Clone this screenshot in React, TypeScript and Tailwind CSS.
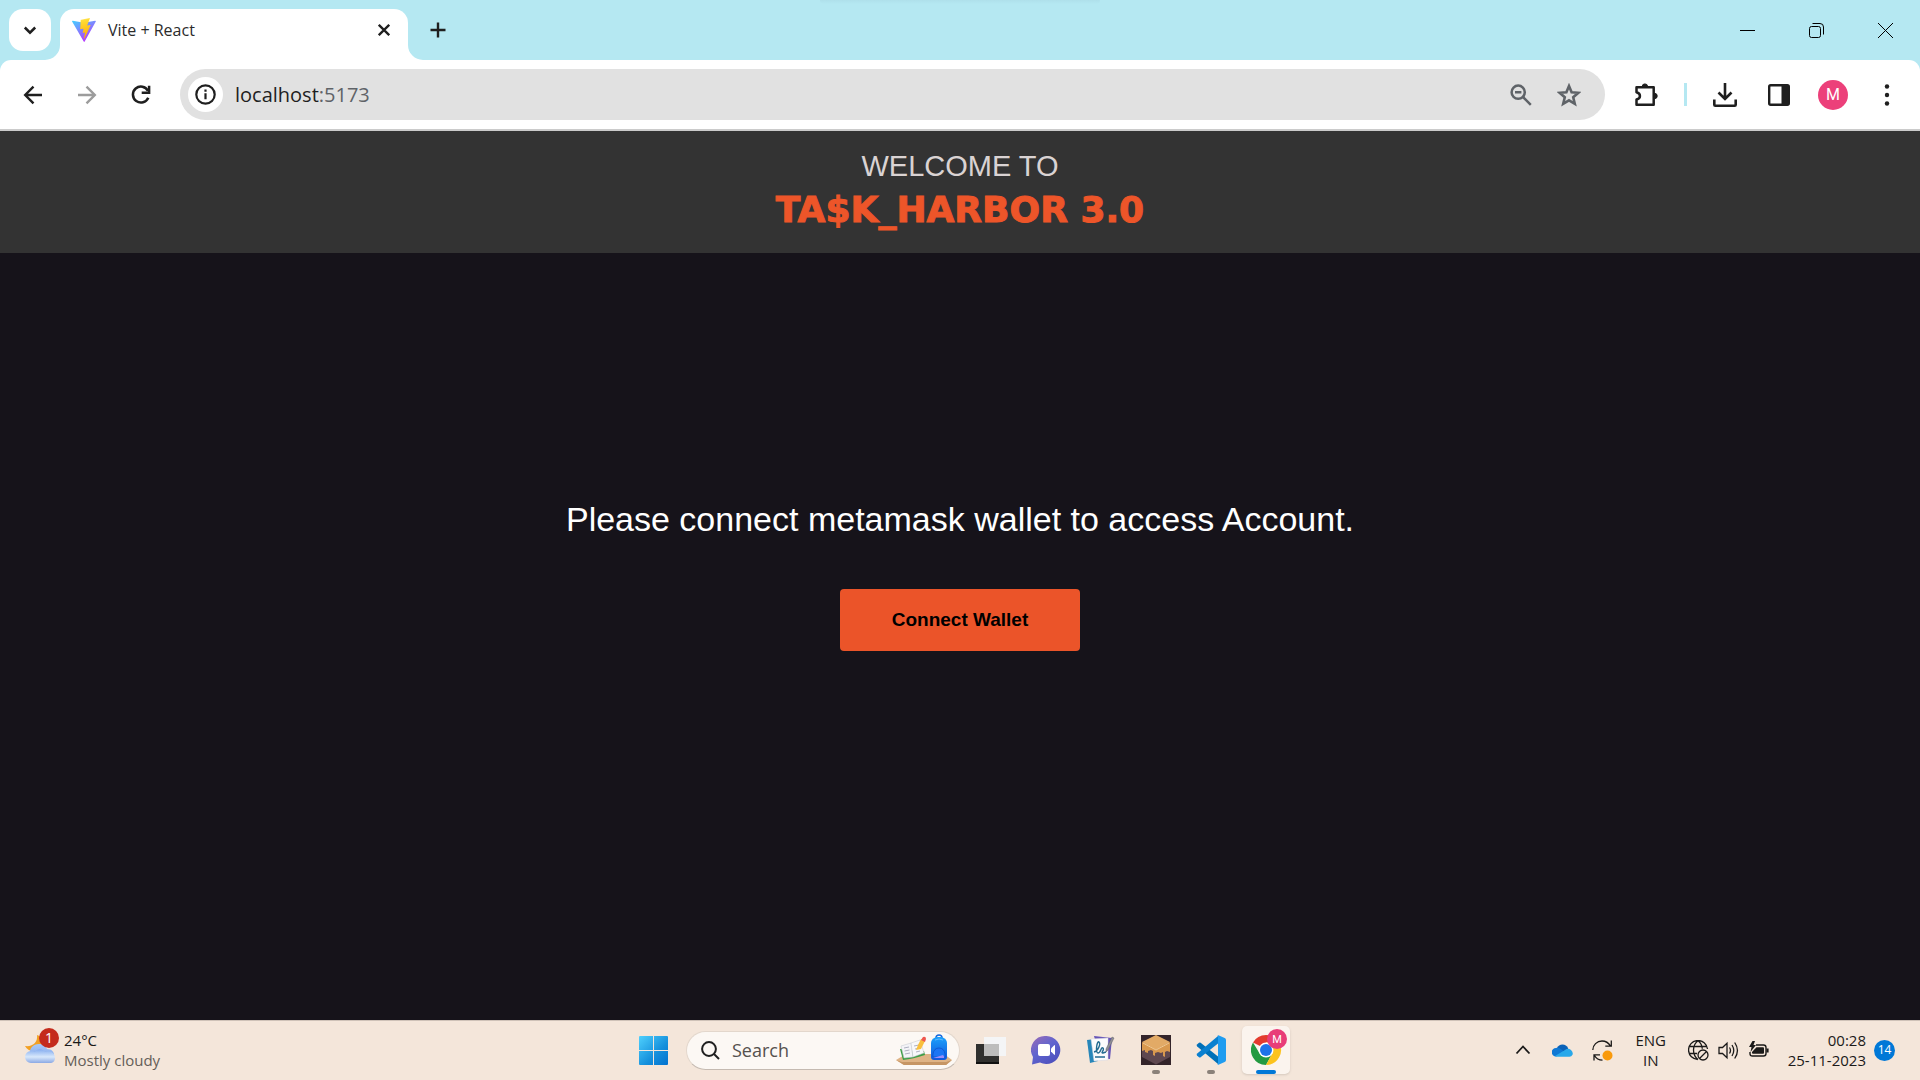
import React from "react";

const uiFont = "font-['Segoe_UI','Open_Sans','Noto_Sans',sans-serif]";

function ViteLogo() {
  return (
    <svg className="size-6" viewBox="0 0 24 24" aria-hidden="true">
      <defs>
        <linearGradient id="viteBody" x1="0" y1="0" x2="0.6" y2="1">
          <stop offset="0" stopColor="#41d1ff" />
          <stop offset="1" stopColor="#bd34fe" />
        </linearGradient>
        <linearGradient id="viteBolt" x1="0.4" y1="0" x2="0.5" y2="1">
          <stop offset="0" stopColor="#ffea83" />
          <stop offset="0.1" stopColor="#ffdd35" />
          <stop offset="1" stopColor="#ffa800" />
        </linearGradient>
      </defs>
      <path d="M23.8 3.6 12.7 23.6c-.2.4-.8.4-1 0L.1 3.6c-.3-.5.1-1 .6-.9L12 4.700l11.1-2c.5-.1 1 .4.7.9Z" fill="url(#viteBody)" />
      <path d="m17.500.1-8.500 1.700c-.2 0-.3.1-.3.3L8.200 11c0 .2.2.4.4.3l2.400-.500c.2-.1.4.1.4.4l-.700 3.400c0 .2.2.4.4.4l1.500-.500c.2-.1.4.1.4.4l-1.100 5.400c-.1.3.4.5.6.2l6-13c.100-.3-.1-.5-.4-.4l-2.500.500c-.2 0-.4-.2-.4-.4L17.900.6c.1-.3-.1-.5-.4-.5Z" fill="url(#viteBolt)" />
    </svg>
  );
}

function TabStrip() {
  return (
    <div className="relative flex h-[60px] items-stretch bg-[#b5e8f2]">
      <span className="absolute inset-x-0 top-0 mx-auto h-1 w-[280px] rounded-b-full bg-linear-to-b from-[#afe0eb] to-[#b5e8f2]" />
      <button aria-label="Search tabs" className="mt-[9px] ml-[9px] flex size-[42px] items-center justify-center rounded-[14px] bg-white">
        <svg className="size-4" viewBox="0 0 16 16" fill="none" stroke="#1f1f1f" strokeWidth="2.500">
          <path d="m2.800 5.500 5.200 5.200 5.200-5.200" />
        </svg>
      </button>
      <div className="relative mt-[9px] ml-[9px] flex w-[348px] items-center rounded-t-[14px] bg-white pb-[9px] pl-3">
        <svg className="absolute bottom-0 -left-[15px] size-[15px]" viewBox="0 0 15 15" aria-hidden="true">
          <path d="M15 0v15H0A15 15 0 0 0 15 0Z" fill="#fff" />
        </svg>
        <svg className="absolute -right-[15px] bottom-0 size-[15px]" viewBox="0 0 15 15" aria-hidden="true">
          <path d="M0 0v15h15A15 15 0 0 1 0 0Z" fill="#fff" />
        </svg>
        <ViteLogo />
        <span className="ml-3 flex-1 text-[16px] leading-5 text-[#2b2b2b]">Vite + React</span>
        <button aria-label="Close tab" className="mr-[15px] flex size-[18px] items-center justify-center">
          <svg className="size-3" viewBox="0 0 12 12" fill="none" stroke="#1f1f1f" strokeWidth="2.300">
            <path d="m.8.8 10.400 10.400M11.200.8.8 11.200" />
          </svg>
        </button>
      </div>
      <button aria-label="New tab" className="ml-4 flex w-7 items-center justify-center">
        <svg className="size-4" viewBox="0 0 16 16" fill="none" stroke="#1f1f1f" strokeWidth="2.400">
          <path d="M8 .5v15M.5 8h15" />
        </svg>
      </button>
      <div className="flex-1" />
      <div className="flex" aria-label="Window controls">
        <button aria-label="Minimise" className="flex w-[69px] items-center justify-center">
          <svg className="size-[15px]" viewBox="0 0 15 15" stroke="#000"><path d="M0 7.500h15" /></svg>
        </button>
        <button aria-label="Restore" className="flex w-[69px] items-center justify-center">
          <svg className="size-[15px]" viewBox="0 0 15 15" fill="none" stroke="#000">
            <rect x=".5" y="3.500" width="11" height="11" rx="2" />
            <path d="M3.500.5H11a3.500 3.500 0 0 1 3.500 3.500v7.500" />
          </svg>
        </button>
        <button aria-label="Close" className="flex w-[69px] items-center justify-center">
          <svg className="size-[15px]" viewBox="0 0 15 15" stroke="#000"><path d="m0 0 15 15M15 0 0 15" /></svg>
        </button>
      </div>
    </div>
  );
}

function ToolButton({ label, children }: { label: string; children: React.ReactNode }) {
  return (
    <button aria-label={label} className="flex h-[42px] w-[54px] items-center justify-center">
      {children}
    </button>
  );
}

function Toolbar() {
  return (
    <div className="bg-[#b5e8f2]">
      <div className="flex h-[71px] items-center rounded-t-[11px] border-b-2 border-[#cbcbcb] bg-white pl-[6px]">
        <ToolButton label="Back">
          <svg className="size-5" viewBox="0 0 20 20" fill="none" stroke="#1f1f1f" strokeWidth="2.400">
            <path d="M19 10H2.500M10.500 1.700 2.200 10l8.300 8.300" />
          </svg>
        </ToolButton>
        <ToolButton label="Forward">
          <svg className="size-5" viewBox="0 0 20 20" fill="none" stroke="#9c9c9c" strokeWidth="2.400">
            <path d="M1 10h16.500M9.500 1.700l8.300 8.300-8.300 8.300" />
          </svg>
        </ToolButton>
        <ToolButton label="Reload">
          <svg className="size-5" viewBox="0 0 20 20" fill="none" stroke="#1f1f1f" strokeWidth="2.500">
            <path d="M17.300 12.700A8 8 0 1 1 17 5.800" />
            <path d="M18.100.8v6.900h-7.400" />
          </svg>
        </ToolButton>
        <div className="ml-3 flex h-[51px] flex-1 items-center rounded-full bg-[#e1e1e1] pl-2">
          <button aria-label="Site information" className="flex size-[35px] items-center justify-center rounded-full bg-white">
            <svg className="size-[21px]" viewBox="0 0 21 21" fill="none" stroke="#1f1f1f" strokeWidth="2.200">
              <circle cx="10.500" cy="10.500" r="9.200" />
              <path d="M10.500 9.300v6M10.500 5.500v2.200" />
            </svg>
          </button>
          <div className="relative ml-3 flex-1">
            <div className="pointer-events-none text-[20px] leading-7 text-[#5f6368]" aria-hidden="true">
              <span className="text-[#1f1f1f]">localhost</span>:5173
            </div>
            <input aria-label="Address" defaultValue="localhost:5173" className="absolute inset-0 w-full bg-transparent text-[20px] leading-7 text-transparent outline-none" />
          </div>
          <button aria-label="Zoom" className="flex w-12 justify-center">
            <svg className="size-[22px]" viewBox="0 0 22 22" fill="none" stroke="#5f6368" strokeWidth="2.500">
              <circle cx="8.200" cy="8.200" r="6.600" />
              <path d="m13 13 7.800 7.800M5 8.200h6.400" />
            </svg>
          </button>
          <button aria-label="Bookmark this tab" className="mr-3 flex w-12 justify-center">
            <svg className="size-6" viewBox="0 0 24 24" fill="none" stroke="#5f6368" strokeWidth="2.600">
              <path d="m12 3 2.600 6.200 6.700.6-5.100 4.400 1.600 6.600L12 17.300l-5.800 3.500 1.600-6.600-5.100-4.400 6.700-.6Z" />
            </svg>
          </button>
        </div>
        <div className="ml-[14px] flex items-center">
          <ToolButton label="Extensions">
            <svg className="size-[26px]" viewBox="0 0 26 26">
              <path d="M3.500 5.200h17.200v17.600H3.500v-5.300c4.600-1.200 4.600-6 0-7.200Z" fill="none" stroke="#1f1f1f" strokeWidth="2.500" strokeLinejoin="round" />
              <path d="M9.200 4.600a2.700 2.700 0 0 1 5.400 0ZM21.500 11.300a2.700 2.700 0 0 1 0 5.400Z" fill="#1f1f1f" stroke="#1f1f1f" />
            </svg>
          </ToolButton>
          <span className="mx-[11px] h-[23px] w-[3px] bg-[#b5e8f2]" />
          <ToolButton label="Downloads">
            <svg className="size-[26px]" viewBox="0 0 26 26" fill="none" stroke="#1f1f1f" strokeWidth="2.600">
              <path d="M13 1v15M6.500 10.500 13 17l6.500-6.500M2.300 17.500v5.200q0 1 1 1h19.400q1 0 1-1v-5.200" />
            </svg>
          </ToolButton>
          <ToolButton label="Side panel">
            <svg className="size-[22px]" viewBox="0 0 22 22">
              <rect x="1.200" y="1.200" width="19.600" height="19.600" rx="1.500" fill="none" stroke="#1f1f1f" strokeWidth="2.400" />
              <path d="M13.500 1h7.300v20h-7.300Z" fill="#1f1f1f" />
            </svg>
          </ToolButton>
          <ToolButton label="Profile">
            <span className="flex size-[30px] items-center justify-center rounded-full bg-[#ec407a] font-['Roboto',sans-serif] text-[16px] text-white">M</span>
          </ToolButton>
          <ToolButton label="Menu">
            <svg className="size-[22px]" viewBox="0 0 22 22" fill="#1f1f1f">
              <circle cx="11" cy="2.500" r="2.200" />
              <circle cx="11" cy="11" r="2.200" />
              <circle cx="11" cy="19.500" r="2.200" />
            </svg>
          </ToolButton>
          <span className="w-[6px]" />
        </div>
      </div>
    </div>
  );
}

function Page() {
  return (
    <div className="flex flex-1 flex-col bg-[#16131a] font-['Liberation_Sans',Arial,sans-serif]">
      <header className="bg-[#333333] pt-4 pb-[18px] text-center">
        <p className="text-[29px] leading-[38px] text-[#dad3d3]">WELCOME TO</p>
        <h1 className="font-['Arial_Black','DejaVu_Sans',sans-serif] text-[36px] leading-[50px] font-black text-[#ed5529] [-webkit-text-stroke:1px_#ed5529]">TA$K_HARBOR 3.0</h1>
      </header>
      <main className="flex flex-1 flex-col items-center pt-[246px]">
        <p className="text-[34px] leading-10 text-white">Please connect metamask wallet to access Account.</p>
        <button className="mt-[50px] rounded-[4px] bg-[#eb5429] px-[52px] py-[19px] text-[19px] leading-6 font-bold text-black">Connect Wallet</button>
      </main>
    </div>
  );
}

function WeatherIcon() {
  return (
    <svg className="h-[44px] w-[36px]" viewBox="0 0 36 44" aria-hidden="true">
      <defs>
        <linearGradient id="cloudTop" x1="0" y1="0" x2="0" y2="1">
          <stop offset="0" stopColor="#a9c9f8" />
          <stop offset="1" stopColor="#8fb0ec" />
        </linearGradient>
        <linearGradient id="cloudFront" x1="0" y1="0" x2="0" y2="1">
          <stop offset="0" stopColor="#86aef0" />
          <stop offset=".55" stopColor="#d8e8fb" />
          <stop offset="1" stopColor="#8ba9e4" />
        </linearGradient>
      </defs>
      <path d="M13 7c1 7-4 12-12 11 3 6 12 7 17 2V9Z" fill="#f2a023" />
      <path d="M6 27c-1-7 3-11 9-11 4 0 7 2 8 5 5 0 7 3 7 6Z" fill="url(#cloudTop)" />
      <path d="M7 35a6 6 0 0 1 0-12c2 0 3 .5 4 1 3-4 8-3 10 0 5-2 10 1 10 6 0 3-2 5-5 5Z" fill="url(#cloudFront)" />
      <circle cx="25" cy="10" r="10" fill="#c42b1c" />
      <text x="25" y="15" textAnchor="middle" fontFamily="Open Sans" fontSize="14" fill="#fff">1</text>
    </svg>
  );
}

function WindowsLogo() {
  return (
    <svg className="size-[29px]" viewBox="0 0 29 29" aria-hidden="true">
      <defs>
        <linearGradient id="win" x1="0" y1="0" x2="29" y2="29" gradientUnits="userSpaceOnUse">
          <stop offset="0" stopColor="#4fd0fd" />
          <stop offset=".6" stopColor="#1590dc" />
          <stop offset="1" stopColor="#0272cf" />
        </linearGradient>
      </defs>
      <path d="M1 0h13v14H0V1q0-1 1-1ZM15 0h13q1 0 1 1v13H15ZM0 15h14v14H1q-1 0-1-1ZM15 15h14v13q0 1-1 1H15Z" fill="url(#win)" />
    </svg>
  );
}

function StudyArt() {
  return (
    <svg className="h-[32px] w-[58px]" viewBox="0 0 58 32" aria-hidden="true">
      <defs>
        <linearGradient id="bag" x1="0" y1="0" x2="0" y2="1">
          <stop offset="0" stopColor="#1ba0fb" />
          <stop offset="1" stopColor="#1056dc" />
        </linearGradient>
      </defs>
      <path d="m1 26 10-6h38l8 6-6 5H9Z" fill="#dfb486" />
      <path d="m1 26 6 2h44l6-2-6 5H9Z" fill="#c69665" />
      <path d="m5 15 3 11q10-1 22-5l-1-4Z" fill="#3c9e46" />
      <path d="m6 12 10-3 2 14-9 1Z" fill="#f4f4f7" stroke="#c3c4cc" strokeWidth=".5" />
      <path d="m16 9 9-3 4 13-11 4Z" fill="#f8f8fa" stroke="#c3c4cc" strokeWidth=".5" />
      <path d="m9 14 5-1M9.500 17l5-1M10 20l5-1M19 12l5-1M20 15l5-1M21 18l4-1" stroke="#9d9eb2" strokeWidth=".8" fill="none" />
      <path d="m23 11-2 5 5-1 4-8-4-2Z" fill="#f9bf3c" />
      <path d="m26 6 2-3q3-1 3 2l-1 3Z" fill="#ee574e" />
      <path d="M41 4c0-4 6-4 6 0" fill="none" stroke="#1668dd" strokeWidth="1.500" />
      <path d="M36 9q0-4 5-6h6q5 2 5 6v14q0 3-3 3H39q-3 0-3-3Z" fill="url(#bag)" />
      <path d="M38 20q1-6 6-6t6 6v3H38Z" fill="#1b75f4" stroke="#0a4dc9" strokeWidth=".7" />
      <path d="m38 24 10-3q2 2 1 3Z" fill="#9b8df8" />
      <path d="M40 6q4-2 8 0" stroke="#5fbaff" fill="none" />
    </svg>
  );
}

function TaskViewIcon() {
  return (
    <svg className="size-[30px]" viewBox="0 0 30 30" aria-hidden="true">
      <path d="M0 9h23v20H0Z" fill="#30302e" />
      <path d="M0 27h23v2H0Z" fill="#111" />
      <path d="M8 2h22v19H8Z" fill="#f4f5f6" />
      <path d="M8 9h15v12H8Z" fill="#bdbdbc" />
    </svg>
  );
}

function ChatIcon() {
  return (
    <svg className="size-[30px]" viewBox="0 0 30 30" aria-hidden="true">
      <defs>
        <linearGradient id="chat" x1="0" y1="0" x2=".7" y2="1">
          <stop offset="0" stopColor="#9c6bb5" />
          <stop offset=".5" stopColor="#6065cf" />
          <stop offset="1" stopColor="#4d50bd" />
        </linearGradient>
      </defs>
      <path d="M15.500 1A14 14 0 1 1 9 27.500L1 29.500l1-7.500A14 14 0 0 1 15.500 1Z" fill="url(#chat)" />
      <rect x="7" y="9" width="12" height="12" rx="2" fill="#fff" />
      <path d="m20 13.500 3-3q1-1 1 .5v8q0 1.500-1 .5l-3-3Z" fill="#fff" />
    </svg>
  );
}

function JournalIcon() {
  return (
    <svg className="size-[30px]" viewBox="0 0 30 30" aria-hidden="true">
      <path d="m1 5 8-1 3 22-8 2Z" fill="#2786b9" />
      <path d="m8 1 18 2-2 21-10-1Z" fill="#6554b7" />
      <path d="m5 4 17-1v22l-14 1Z" fill="#fbfbfd" stroke="#d4d4df" strokeWidth=".5" />
      <path d="M8 17c4-1 7-8 5-10s-4 11-1 11 3-7 5-5-3 5 0 5l3-1M9 22h10" fill="none" stroke="#246b91" strokeWidth="1.400" />
      <path d="m20 14 6-12 2 1-6 12-2 2Z" fill="#8f8f96" stroke="#5d5c64" strokeWidth=".5" />
    </svg>
  );
}

function BlockGameIcon() {
  return (
    <svg className="size-[30px]" viewBox="0 0 30 30" aria-hidden="true">
      <path d="M0 0h30v30H0Z" fill="#33242a" />
      <path d="M1 7v15l14 7.500L29 22V7Z" fill="#5f4850" />
      <path d="m1 7 14-7 14 7-14 8Z" fill="#e2aa66" />
      <path d="M1 7v9l3-1v2l3 1v-2l3-1 2 1v4l2 1v-3l3-1 3 1 2-1v4l2 1v-5l2-1 3 1V7l-14 8Z" fill="#d9994f" />
      <path d="m2 8 13 7 13-7" stroke="#f3c991" fill="none" />
    </svg>
  );
}

function CodeIcon() {
  return (
    <svg className="size-[30px]" viewBox="0 0 30 30" aria-hidden="true">
      <path d="M1 9.500 3 7.700q.8-.6 1.600 0L22 21.500V29L1.200 11.400q-1-.9-.2-1.900Z" fill="#0070b8" />
      <path d="m1 20.500 2 1.800q.8.600 1.600 0L22 8.500V1L1.200 18.600q-1 .9-.2 1.900Z" fill="#0a80d0" />
      <path d="M21.500.5q.7-.5 1.500-.1l5.700 2.700q1.300.6 1.300 2v19.800q0 1.400-1.300 2L23 29.600q-.8.4-1.500-.1.500-.3.500-1V1.500q0-.7-.5-1Z" fill="#1f9cf0" />
    </svg>
  );
}

function ChromeIcon() {
  return (
    <svg className="h-[36px] w-[36px]" viewBox="0 0 36 36" aria-hidden="true">
      <path d="M15 20 2 13.500A15 15 0 0 1 28 13.500L15 13.500Z" fill="#e33b2e" />
      <path d="M8.500 24.200 2 13.500A15 15 0 0 0 15 36l6.500-11.800Z" fill="#249a41" />
      <path d="M15 13.500h13A15 15 0 0 1 15 36l6.500-11.800Z" fill="#fcc31e" />
      <circle cx="15" cy="21" r="7.500" fill="#fff" />
      <circle cx="15" cy="21" r="6" fill="#1f73e8" />
      <circle cx="26" cy="10" r="10" fill="#e83d78" />
      <text x="26" y="14" textAnchor="middle" fontFamily="Roboto" fontSize="11" fill="#fff">M</text>
    </svg>
  );
}

function AppButton({ label, running, children }: { label: string; running?: boolean; children: React.ReactNode }) {
  return (
    <button aria-label={label} className="relative flex h-[60px] w-[55px] items-center justify-center">
      {children}
      {running && <span className="absolute bottom-[6px] h-1 w-2 rounded-full bg-[#8a8179]" />}
    </button>
  );
}

function Tray() {
  return (
    <div className="flex items-center justify-end pr-[25px] text-[#1b1a19]">
      <button aria-label="Show hidden icons" className="flex w-[40px] justify-center">
        <svg className="size-4" viewBox="0 0 16 16" fill="none" stroke="#1b1a19" strokeWidth="1.800"><path d="m1.500 11.500 6.500-7 6.500 7" /></svg>
      </button>
      <button aria-label="OneDrive" className="flex w-[40px] justify-center">
        <svg className="h-[14px] w-[21px]" viewBox="0 0 21 14">
          <path d="M5 5a6 6 0 0 1 11 0l1 5H3Z" fill="#0a62b8" />
          <path d="M4 13.500a4.300 4.300 0 0 1 0-8.600q3-.4 5 1.300l4 3Z" fill="#0f78d4" />
          <path d="m3 13 10-6q3-2.500 6 0 2.500 2.500 1.500 4.700-1 2.100-3 2.100H4Z" fill="#28a8ea" />
        </svg>
      </button>
      <button aria-label="Sync status" className="flex w-[40px] justify-center">
        <svg className="size-[21px]" viewBox="0 0 21 21" fill="none" stroke="#1b1a19" strokeWidth="1.300">
          <path d="M.8 10C.8 5 5 1 10 1c3.500 0 6.700 2 8.500 5M19.300.5v5.700h-6M2 20.500v-5.700h6M2.300 15.200c1.700 3 4.700 4.900 8.200 5" />
          <circle cx="15.500" cy="15.500" r="5" fill="#f99a0c" stroke="none" />
        </svg>
      </button>
      <button aria-label="Language" className="ml-2 w-[40px] text-center text-[15px] leading-5">ENG<br />IN</button>
      <button aria-label="Network, volume and battery" className="ml-[17px] flex gap-[9px]">
        <svg className="size-[21px]" viewBox="0 0 21 21" fill="none" stroke="#1b1a19" strokeWidth="1.300">
          <path d="M10 19.500A9.500 9.500 0 1 1 19.500 9M10 19.500C4 15 4 5 10 .7q4 3 4.300 8M1.500 6.500h17M1.500 13.500H9" />
          <circle cx="15" cy="15" r="5" />
          <path d="m11.500 18.500 7-7" />
        </svg>
        <svg className="size-[21px]" viewBox="0 0 21 21" fill="none" stroke="#1b1a19" strokeWidth="1.300">
          <path d="M1 7.500h3.500L9 3.300v14.400l-4.500-4.200H1ZM11.500 7.500q2 3 0 6M14 5q3.500 5.500 0 11M16.700 2.500q5.500 8 0 16" />
        </svg>
        <svg className="size-[21px]" viewBox="0 0 21 21" fill="none" stroke="#1b1a19" strokeWidth="1.400">
          <path d="M8 5h7.500q2.500 0 2.500 2.500v6q0 2.500-2.500 2.500h-11Q2 16 2 13.500V12" />
          <path d="M8.500 7.200H15q1 0 1 1v4.600q0 1-1 1H5q-1 0-1-1V12Z" fill="#1b1a19" stroke="none" />
          <path d="M19.500 8.500v4" strokeWidth="2.200" />
          <path d="M4.500 1 1 7h2.500L2.500 12 8 5H5.500L7 1Z" fill="#1b1a19" stroke="none" />
        </svg>
      </button>
      <button aria-label="Date and time" className="ml-[19px] text-right text-[15px] leading-5">00:28<br />25-11-2023</button>
      <button aria-label="Notifications" className="ml-2 flex size-[21px] items-center justify-center rounded-full bg-[#0078d7] text-[12px] text-white">14</button>
    </div>
  );
}

function Taskbar() {
  return (
    <footer className="grid h-[60px] grid-cols-[1fr_auto_1fr] items-center bg-[#f4e6da] shadow-[inset_0_1px_0_#cfc2b8]">
      <button className="flex items-center justify-self-start pl-6 text-left">
        <WeatherIcon />
        <span className="ml-1 text-[15px] leading-5">
          <span className="block text-[#1b1a19]">24°C</span>
          <span className="block text-[#655e58]">Mostly cloudy</span>
        </span>
      </button>
      <div className="flex items-center pl-[9px]">
        <button aria-label="Start" className="mr-[18px]"><WindowsLogo /></button>
        <label className="mr-[3px] flex h-[39px] w-[274px] items-center rounded-full border border-[#e3d7cc] border-b-[#c5bab1] bg-[#fcf8f4] pr-[6px] pl-[14px]">
          <svg className="size-[19px] shrink-0" viewBox="0 0 19 19" fill="none" stroke="#1f1f1f" strokeWidth="2">
            <circle cx="8" cy="8" r="6.900" />
            <path d="m13 13 5 5" />
          </svg>
          <input aria-label="Search" placeholder="Search" className="ml-3 w-[120px] min-w-0 flex-1 bg-transparent text-[18px] leading-6 outline-none placeholder:text-[#55514e]" />
          <StudyArt />
        </label>
        <AppButton label="Task view"><TaskViewIcon /></AppButton>
        <AppButton label="Chat"><ChatIcon /></AppButton>
        <AppButton label="Journal"><JournalIcon /></AppButton>
        <AppButton label="Block game" running><BlockGameIcon /></AppButton>
        <AppButton label="Visual Studio Code" running><CodeIcon /></AppButton>
        <button aria-label="Google Chrome" className="relative ml-1 flex size-12 items-start justify-end rounded-[5px] bg-[#fbf4ee] pt-[3px] pr-[3px] shadow-sm">
          <ChromeIcon />
          <span className="absolute bottom-0 left-[14px] h-1 w-5 rounded-full bg-[#0078d7]" />
        </button>
      </div>
      <Tray />
    </footer>
  );
}

export default function App() {
  return (
    <div className={`flex min-h-screen flex-col ${uiFont}`}>
      <TabStrip />
      <Toolbar />
      <Page />
      <Taskbar />
    </div>
  );
}
